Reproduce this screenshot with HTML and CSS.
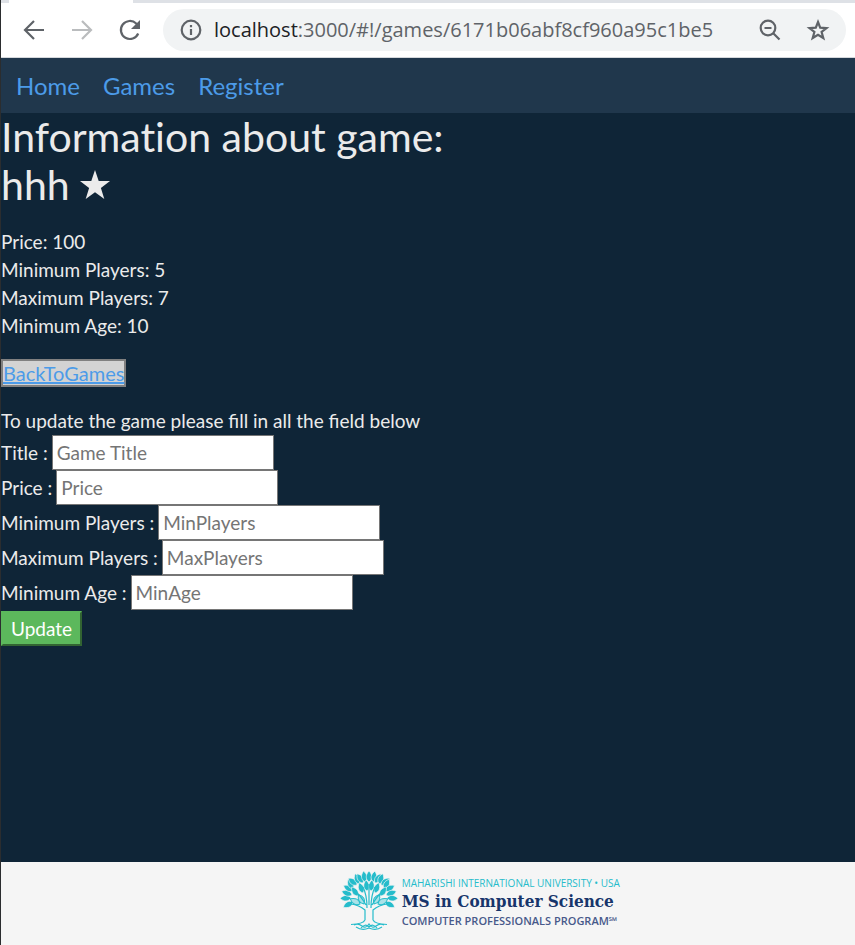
FILE: index.html
```html
<!DOCTYPE html>
<html lang="en">
<head>
<meta charset="utf-8">
<title>Game information</title>
<link rel="stylesheet" href="styles.css">
</head>
<body>
<header class="browser">
  <div class="tab-strip"><span class="active-tab"></span></div>
  <div class="toolbar">
    <button class="icon-button" type="button" aria-label="Back">
      <svg viewBox="0 0 24 24"><path d="M22 12H3M12 3l-9 9 9 9"/></svg>
    </button>
    <button class="icon-button disabled" type="button" aria-label="Forward">
      <svg viewBox="0 0 24 24"><path d="M2 12h19M12 3l9 9-9 9"/></svg>
    </button>
    <button class="icon-button" type="button" aria-label="Reload">
      <svg viewBox="0 0 24 24"><path d="M20.200 15.500a9 9 0 1 1-2-10L20 7.500"/><path class="solid" d="M22 2v9h-9z"/></svg>
    </button>
    <div class="address">
      <button class="icon-button" type="button" aria-label="Site information">
        <svg viewBox="0 0 24 24"><circle cx="12" cy="12" r="9.300"/><path d="M12 11v6M12 7v2.300"/></svg>
      </button>
      <span class="url"><span class="host">localhost</span>:3000/#!/games/6171b06abf8cf960a95c1be5</span>
      <button class="icon-button" type="button" aria-label="Zoom">
        <svg viewBox="0 0 24 24"><circle cx="10" cy="10" r="7.300"/><path d="M15 15l6.500 6.500M6.500 10h7"/></svg>
      </button>
      <button class="icon-button" type="button" aria-label="Bookmark">
        <svg viewBox="0 0 24 24"><path d="M12 4l2.200 5.700 6.300.4-4.900 3.900 1.700 6L12 16.700 6.700 20l1.700-6-4.900-3.900 6.300-.4z"/></svg>
      </button>
    </div>
  </div>
</header>
<nav class="site-nav">
  <a href="#home">Home</a>
  <a href="#games">Games</a>
  <a href="#register">Register</a>
</nav>
<main>
  <h1>Information about game:<br>hhh <svg class="rating" viewBox="0 0 30 30" role="img" aria-label="1 star"><path d="M15 0l3.700 11H30l-9.100 6.900L24.300 29 15 22.200 5.700 29l3.400-11.100L0 11h11.300z"/></svg></h1>
  <p class="details">
    Price: 100<br>
    Minimum Players: 5<br>
    Maximum Players: 7<br>
    Minimum Age: 10
  </p>
  <a class="back" href="#games">BackToGames</a>
  <form>
    <p class="hint">To update the game please fill in all the field below</p>
    <div class="field"><label for="title">Title :</label><input id="title" type="text" placeholder="Game Title"></div>
    <div class="field"><label for="price">Price :</label><input id="price" type="text" placeholder="Price"></div>
    <div class="field"><label for="min-players">Minimum Players :</label><input id="min-players" type="text" placeholder="MinPlayers"></div>
    <div class="field"><label for="max-players">Maximum Players :</label><input id="max-players" type="text" placeholder="MaxPlayers"></div>
    <div class="field"><label for="min-age">Minimum Age :</label><input id="min-age" type="text" placeholder="MinAge"></div>
    <button class="update" type="button">Update</button>
  </form>
</main>
<footer>
  <svg class="tree" viewBox="0 0 60 62" aria-hidden="true">
    <defs>
      <path id="leaf" d="M0 0C-3.800-3-3.600-7 0-11 3.600-7 3.800-3 0 0z"/>
    </defs>
    <g class="leaves">
      <use href="#leaf" transform="translate(12 28) rotate(-92)"/>
      <use href="#leaf" transform="translate(14 32) rotate(-118)"/>
      <use href="#leaf" transform="translate(13 25) rotate(-70)"/>
      <use href="#leaf" transform="translate(14 21) rotate(-60)"/>
      <use href="#leaf" transform="translate(14 19) rotate(-27)"/>
      <use href="#leaf" transform="translate(18 15) rotate(-52)"/>
      <use href="#leaf" transform="translate(20 14) rotate(-20)"/>
      <use href="#leaf" transform="translate(24 13) rotate(-32)"/>
      <use href="#leaf" transform="translate(26 12) rotate(-8)"/>
      <use href="#leaf" transform="translate(30 12)"/>
      <use href="#leaf" transform="translate(34 12) rotate(10)"/>
      <use href="#leaf" transform="translate(36 13) rotate(32)"/>
      <use href="#leaf" transform="translate(40 14) rotate(20)"/>
      <use href="#leaf" transform="translate(42 15) rotate(52)"/>
      <use href="#leaf" transform="translate(45 19) rotate(28)"/>
      <use href="#leaf" transform="translate(46 21) rotate(60)"/>
      <use href="#leaf" transform="translate(47 25) rotate(70)"/>
      <use href="#leaf" transform="translate(48 28) rotate(92)"/>
      <use href="#leaf" transform="translate(46 32) rotate(118)"/>
      <use href="#leaf" transform="translate(19 26) rotate(-35)"/>
      <use href="#leaf" transform="translate(41 26) rotate(35)"/>
      <use href="#leaf" transform="translate(24 23) rotate(-20)"/>
      <use href="#leaf" transform="translate(36 23) rotate(20)"/>
      <use href="#leaf" transform="translate(28 21) rotate(-5)"/>
      <use href="#leaf" transform="translate(32 21) rotate(5)"/>
    </g>
    <g class="open-leaves">
      <use href="#leaf" transform="translate(25 34) rotate(-30)"/>
      <use href="#leaf" transform="translate(35 34) rotate(30)"/>
      <use href="#leaf" transform="translate(21 34) rotate(-62)"/>
      <use href="#leaf" transform="translate(39 34) rotate(62)"/>
    </g>
    <path class="branches" d="M26 50V40Q20 35 12 34M34 50V40Q40 35 48 34M28 38Q28 25 24 17M32 38Q32 25 36 17M30 35V14M27 35Q22 26 16 21M33 35Q38 26 44 21M26 50Q24 54 12 54.500M34 50Q36 54 48 54.500M15 55q4-2 8 1t7-2q3 5 7 2t8-1M22 58q4-5 8-1 4-4 8 1M17 57q6 4 13 1 7 3 13-1"/>
  </svg>
  <div class="brand">
    <span class="university">MAHARISHI INTERNATIONAL UNIVERSITY • USA</span>
    <strong>MS in Computer Science</strong>
    <span class="program">COMPUTER PROFESSIONALS PROGRAM℠</span>
  </div>
</footer>
</body>
</html>
```
FILE: styles.css
```css
* {
  box-sizing: border-box;
}

body {
  margin: 0;
  min-height: 100vh;
  display: flex;
  flex-direction: column;
  border-left: 1px solid #2b2d2f;
  background: #0f2537;
  color: #ebebeb;
  font: 19px/28px Lato, sans-serif;
}

a {
  color: #4c9be8;
}

.browser {
  background: #fff;
  border-bottom: 1px solid #d5d8dc;
}

.tab-strip {
  height: 3px;
  background: #dee1e6;
}

.active-tab {
  display: block;
  width: 124px;
  height: 100%;
  margin-left: 8px;
  background: #fff;
}

.toolbar {
  display: flex;
  align-items: center;
  gap: 24px;
  padding: 6px 9px 6px 21px;
}

.icon-button {
  flex: none;
  display: block;
  width: 24px;
  height: 24px;
  padding: 0;
  border: 0;
  background: none;
  color: #5f6368;
}

.icon-button.disabled {
  color: #babcbe;
}

.icon-button svg {
  display: block;
  fill: none;
  stroke: currentColor;
  stroke-width: 2.2;
}

.icon-button .solid {
  fill: currentColor;
  stroke: none;
}

.address {
  flex: 1;
  min-width: 0;
  height: 42px;
  margin-left: -3px;
  padding: 0 16px;
  display: flex;
  align-items: center;
  gap: 24px;
  border-radius: 21px;
  background: #f1f3f4;
}

.url {
  flex: 1;
  min-width: 0;
  margin-left: -13px;
  overflow: hidden;
  white-space: nowrap;
  color: #5f6368;
  font-family: "Open Sans", sans-serif;
  font-size: 20px;
}

.host {
  color: #202124;
}

.site-nav {
  display: flex;
  gap: 23px;
  padding: 14px 15px 13px;
  background: #20374c;
  font-size: 24px;
}

.site-nav a {
  text-decoration: none;
}

main {
  flex: 1;
}

h1 {
  margin: 0 0 19px;
  font-size: 41px;
  font-weight: 400;
  font-variant-ligatures: none;
  line-height: 48px;
}

.rating {
  width: 30px;
  height: 30px;
  fill: currentColor;
}

.details {
  margin: 0 0 19px;
}

.back {
  display: inline-block;
  border: 2px solid #808080;
  background: #d3d3d3;
  font-size: 20px;
  line-height: 24px;
}

form {
  margin-top: 19px;
}

.hint {
  margin: 0;
}

.field {
  display: flex;
  align-items: center;
  gap: 4px;
}

.field input {
  width: 222px;
  height: 35px;
  padding: 1px 4px;
  border: 1px solid #767676;
  background: #fff;
  font: inherit;
}

.field input::placeholder {
  color: #757575;
}

.update {
  display: block;
  height: 35px;
  margin-top: 1px;
  padding: 0 8px;
  border: 2px outset #5cb85c;
  background: #5cb85c;
  color: #fff;
  font: inherit;
}

footer {
  display: flex;
  justify-content: center;
  gap: 3px;
  padding: 8px 0 13px 12%;
  background: #f5f5f5;
}

.tree {
  width: 60px;
  height: 62px;
}

.leaves {
  fill: #25bccb;
  stroke: #f5f5f5;
  stroke-width: 0.6;
}

.open-leaves {
  fill: #a9e2e8;
  stroke: #25bccb;
}

.branches {
  fill: none;
  stroke: #25bccb;
  stroke-width: 1.2;
}

.brand {
  display: flex;
  flex-direction: column;
  padding-top: 6px;
  font-family: "Open Sans", sans-serif;
  white-space: nowrap;
}

.university {
  color: #25bccb;
  font-size: 10px;
  font-weight: 500;
  line-height: 14px;
}

.brand strong {
  color: #17356b;
  font: bold 17px/22px "DejaVu Serif Condensed", "DejaVu Serif", serif;
}

.program {
  color: #47598a;
  font-size: 11px;
  font-weight: 600;
  line-height: 18px;
}
```
